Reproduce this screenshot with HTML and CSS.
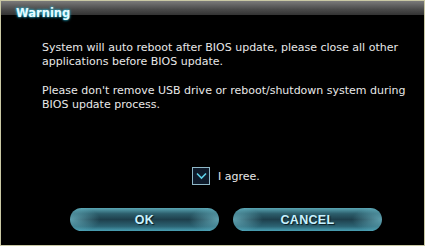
FILE: index.html
```html
<!DOCTYPE html>
<html>
<head>
<meta charset="utf-8">
<link rel="stylesheet" href="styles.css">
</head>
<body>
<div class="dialog">
  <div class="titlebar"><span class="title">Warning</span></div>
  <div class="content">
    <p class="msg">System will auto reboot after BIOS update, please close all other applications before BIOS update.</p>
    <p class="msg">Please don't remove USB drive or reboot/shutdown system during BIOS update process.</p>
  </div>
  <div class="agree">
    <span class="check"><svg width="11" height="8" viewBox="0 0 11 8"><path d="M1 1.5 L5.5 6 L10 1.5" fill="none" stroke="#5fd0e8" stroke-width="1.6"/></svg></span>
    <span class="agree-label">I agree.</span>
  </div>
  <div class="buttons">
    <button class="btn">OK</button>
    <button class="btn">CANCEL</button>
  </div>
</div>
</body>
</html>
```
FILE: styles.css
```css
html, body {
  margin: 0;
  padding: 0;
  background: #000;
}
.dialog {
  width: 425px;
  height: 246px;
  box-sizing: border-box;
  border: 1px solid #c9c8a4;
  background: #000;
  display: flex;
  flex-direction: column;
}
.titlebar {
  height: 14px;
  background: linear-gradient(#7a7a7a, #4a4a4a 60%, #333);
  position: relative;
}
.title {
  position: absolute;
  left: 15px;
  top: 5px;
  font-family: "DejaVu Sans", sans-serif;
  font-weight: bold;
  font-size: 11.5px;
  color: #e6fbff;
  text-shadow: 0 0 2px #2ab8d8, 0 0 3px #2ab8d8;
  line-height: 14px;
}
.content {
  padding: 26px 0 0 41px;
}
.msg {
  margin: 0 0 15px 0;
  font-family: "DejaVu Sans", sans-serif;
  font-size: 11px;
  line-height: 14px;
  color: #e8e8e8;
  width: 370px;
}
.agree {
  display: flex;
  align-items: center;
  gap: 8px;
  margin-top: 40px;
  padding-left: 191px;
}
.check {
  width: 16px;
  height: 16px;
  border: 1px solid #8fb8c8;
  background: #0e1a2a;
  display: flex;
  align-items: center;
  justify-content: center;
}
.agree-label {
  font-family: "DejaVu Sans", sans-serif;
  font-size: 11px;
  color: #e8e8e8;
}
.buttons {
  display: flex;
  gap: 14px;
  margin-top: 23px;
  margin-left: 69px;
}
.btn {
  width: 149px;
  height: 23px;
  border: none;
  border-radius: 12px;
  padding: 0;
  background:
    radial-gradient(ellipse 30px 14px at 0% 50%, rgba(120,200,215,0.7), transparent),
    radial-gradient(ellipse 30px 14px at 100% 50%, rgba(120,200,215,0.7), transparent),
    linear-gradient(#5aa6b4, #2c5e6c 25%, #1e3f4c 50%, #2c6474 80%, #4aa0b4);
  font-family: "Liberation Sans", sans-serif;
  font-weight: bold;
  font-size: 12.5px;
  color: #c8f2ff;
  text-shadow: 1px 1px 1px #0a1a22;
  letter-spacing: 0.3px;
}
```
